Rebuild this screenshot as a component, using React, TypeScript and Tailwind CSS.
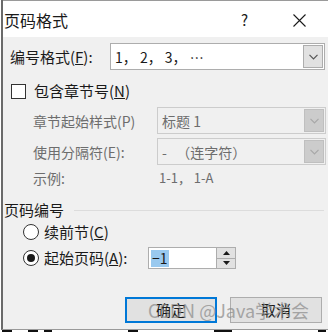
import React from 'react';

// Small caret used in combo boxes
function Caret({ color }: { color: string }) {
  return (
    <svg width="9" height="6" viewBox="0 0 9 6">
      <path d="M0.5 0.8 L4.5 4.8 L8.5 0.8" fill="none" stroke={color} strokeWidth="1.2" />
    </svg>
  );
}

interface ComboProps {
  value: string;
  width: string;
  disabled?: boolean;
}

function Combo({ value, width, disabled }: ComboProps) {
  return (
    <div
      className={`flex h-[27px] items-stretch border ${width} ${
        disabled ? 'border-[#cccccc] bg-[#f0f0f0] text-[#6d6d6d]' : 'border-[#adadad] bg-white text-[#1a1a1a]'
      }`}
    >
      <div className="flex flex-1 items-center whitespace-pre pl-[4px] text-[14px] leading-[20px]">{value}</div>
      <div
        className={`m-[1px] flex w-[20px] items-center justify-center border ${
          disabled ? 'border-[#bfbfbf] bg-[#cccccc]' : 'border-[#adadad] bg-[#e1e1e1]'
        }`}
      >
        <Caret color={disabled ? '#a8a8a8' : '#555555'} />
      </div>
    </div>
  );
}

function Radio({ checked }: { checked?: boolean }) {
  return (
    <div className="flex h-[16px] w-[16px] items-center justify-center rounded-full border border-[#333333] bg-white">
      {checked && <div className="h-[8px] w-[8px] rounded-full bg-[#1a1a1a]" />}
    </div>
  );
}

export default function App() {
  return (
    <div
      className="relative h-[332px] w-[328px] overflow-hidden bg-white text-[#1a1a1a] leading-[20px]"
      style={{ fontFamily: '"Noto Sans CJK SC", "Noto Sans", sans-serif' }}
    >
      <div className="ml-[1px] flex h-[330px] flex-col border-b border-l-2 border-[#6a6a6a] border-b-[#9a9a9a]">
        {/* title bar */}
        <div className="flex h-[37px] shrink-0 items-center border-t border-[#9a9a9a] bg-white">
          <span className="pl-[1px] pt-[2px] text-[16px] leading-[20px]">页码格式</span>
          <span className="ml-[173px] pt-[2px] text-[15px] leading-[20px]">?</span>
          <div className="ml-[45px] pt-[2px]">
            <svg width="13" height="13" viewBox="0 0 13 13">
              <path d="M0.5 0.5 L12.5 12.5 M12.5 0.5 L0.5 12.5" stroke="#1a1a1a" strokeWidth="1.1" />
            </svg>
          </div>
        </div>

        {/* body */}
        <div className="flex flex-1 flex-col bg-[#f0f0f0] text-[14px]">
          <div className="mt-[6px] flex h-[27px] items-center">
            <span className="ml-[7px] w-[100px] text-[15px] leading-[20px]">
              编号格式(<u>F</u>):
            </span>
            <Combo value="1， 2， 3， ⋯" width="w-[215px]" />
          </div>

          <div className="mt-[13px] flex h-[16px] items-center">
            <div className="ml-[8px] h-[15px] w-[15px] border border-[#333333] bg-white" />
            <span className="ml-[8px] text-[15px] leading-[20px]">
              包含章节号(<u>N</u>)
            </span>
          </div>

          <div className="mt-[8px] flex h-[27px] items-center text-[#6d6d6d]">
            <span className="ml-[30px] w-[124px] text-[14px] leading-[20px]">章节起始样式(P)</span>
            <Combo value="标题 1" width="w-[169px]" disabled />
          </div>

          <div className="mt-[4px] flex h-[27px] items-center text-[#6d6d6d]">
            <span className="ml-[30px] w-[124px] text-[14px] leading-[20px]">使用分隔符(E):</span>
            <Combo value="-   （连字符）" width="w-[169px]" disabled />
          </div>

          <div className="mt-[4px] flex h-[18px] items-center text-[#6d6d6d]">
            <span className="ml-[30px] w-[126px] text-[14px] leading-[18px]">示例:</span>
            <span className="text-[13px] leading-[18px]">1-1， 1-A</span>
          </div>

          <div className="mt-[13px] flex h-[20px] items-center">
            <span className="ml-[1px] text-[15px] leading-[20px]">页码编号</span>
            <div className="ml-[10px] mr-[4px] h-px flex-1 bg-[#dcdcdc]" />
          </div>

          <div className="mt-[2px] flex h-[20px] items-center">
            <div className="ml-[20px]">
              <Radio />
            </div>
            <span className="ml-[5px] text-[15px] leading-[20px]">
              续前节(<u>C</u>)
            </span>
          </div>

          <div className="mt-[5px] flex h-[22px] items-center">
            <div className="ml-[20px]">
              <Radio checked />
            </div>
            <span className="ml-[5px] w-[104px] text-[15px] leading-[20px]">
              起始页码(<u>A</u>):
            </span>
            <div className="flex h-[22px] w-[88px] items-stretch border border-[#adadad] bg-white">
              <div className="flex flex-1 items-center pl-[2px]">
                <span className="bg-[#99c9ef] px-[1px] text-[14px] leading-[17px]">−1</span>
              </div>
              <div className="flex w-[19px] flex-col border-l border-[#adadad] bg-[#e1e1e1]">
                <div className="flex flex-1 items-center justify-center border-b border-[#adadad]">
                  <svg width="7" height="4" viewBox="0 0 7 4">
                    <path d="M0 4 L3.5 0 L7 4 Z" fill="#1a1a1a" />
                  </svg>
                </div>
                <div className="flex flex-1 items-center justify-center">
                  <svg width="7" height="4" viewBox="0 0 7 4">
                    <path d="M0 0 L3.5 4 L7 0 Z" fill="#1a1a1a" />
                  </svg>
                </div>
              </div>
            </div>
          </div>

          <div className="mb-[6px] mt-auto flex">
            <button className="ml-[122px] flex h-[26px] w-[92px] items-center justify-center border-2 border-[#0078d7] bg-[#e1e1e1] text-[15px] leading-[20px]">
              确定
            </button>
            <button className="ml-[13px] flex h-[26px] w-[92px] items-center justify-center border border-[#adadad] bg-[#e1e1e1] text-[15px] leading-[20px]">
              取消
            </button>
          </div>
        </div>
      </div>

      {/* document text peeking under the dialog */}
      <div className="flex h-[2px] gap-[6px] pl-[2px]">
        <div className="h-[2px] w-[10px] bg-[#111]" />
        <div className="ml-[10px] h-[2px] w-[10px] bg-[#111]" />
        <div className="h-[2px] w-[8px] bg-[#111]" />
        <div className="ml-[70px] h-[2px] w-[10px] bg-[#111]" />
        <div className="ml-[70px] h-[2px] w-[18px] bg-[#111]" />
        <div className="ml-[80px] h-[2px] w-[8px] bg-[#111]" />
      </div>

      {/* watermark */}
      <div className="pointer-events-none absolute left-[148px] top-[298px] text-[18px] leading-[24px] text-[#8a8a8a] opacity-70">
        CSDN @Java学术会
      </div>
    </div>
  );
}
